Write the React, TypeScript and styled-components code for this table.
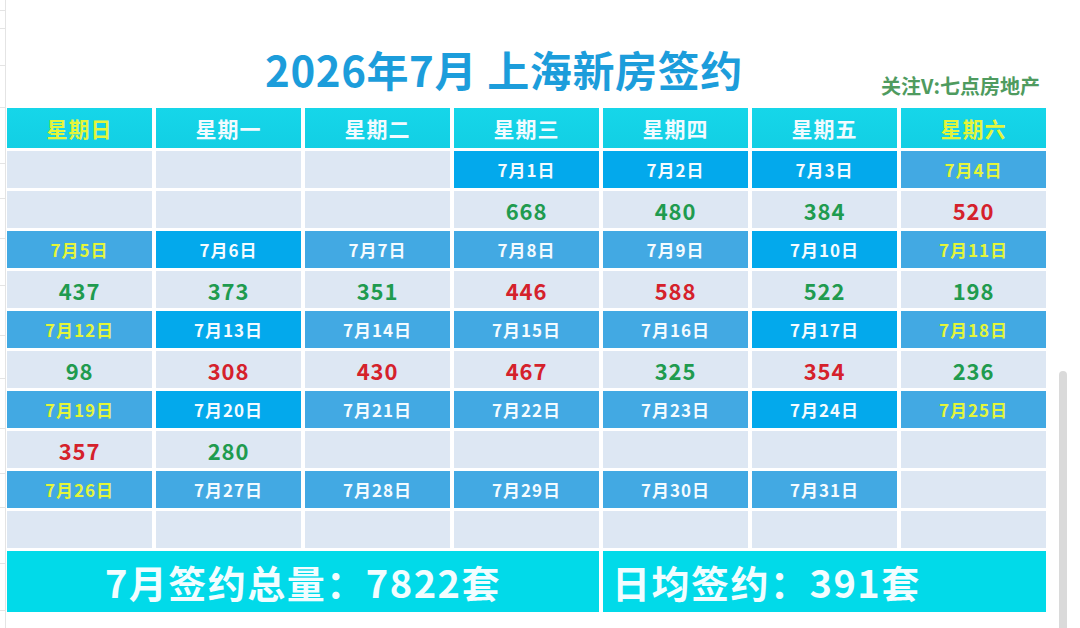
import * as React from "react";
import styled, { createGlobalStyle } from "styled-components";

const GlobalStyle = createGlobalStyle`
  html, body {
    margin: 0;
    padding: 0;
    background: #ffffff;
  }
  body {
    font-family: "Noto Sans CJK SC", "Noto Sans", sans-serif;
  }
`;

const Page = styled.div`
  position: relative;
  width: 1080px;
  height: 628px;
  overflow: hidden;
  display: flex;
  background: #fff;
`;

const Gutter = styled.div`
  position: relative;
  width: 5px;
  flex: none;
  border-right: 1px solid #e4e4e4;
`;

const Tick = styled.div<{ $top: number }>`
  position: absolute;
  left: 0;
  width: 5px;
  top: ${(p) => p.$top}px;
  border-top: 1px solid #e4e4e4;
`;

const Main = styled.div`
  flex: 1;
  padding-left: 1px;
  display: flex;
  flex-direction: column;
`;

const Heading = styled.div`
  height: 108px;
  width: 1039px;
  display: grid;
  grid-template-columns: 1fr auto;
  align-items: end;
`;

const Title = styled.h1`
  margin: 0 0 14px 258px;
  font-size: 42px;
  font-weight: 700;
  color: #1c9ddb;
  letter-spacing: 0.6px;
  line-height: 1.2;
  white-space: nowrap;
`;

const Follow = styled.div`
  margin: 0 6px 8px 0;
  font-size: 20px;
  font-weight: 700;
  color: #4f9b5f;
  white-space: nowrap;
`;

const Table = styled.div`
  display: grid;
  grid-template-columns: repeat(7, 145px);
  grid-template-rows: 40px repeat(10, 37px) 61px;
  column-gap: 4px;
  row-gap: 3px;
`;

const HeadCell = styled.div<{ $weekend?: boolean }>`
  display: flex;
  align-items: center;
  justify-content: center;
  background: linear-gradient(180deg, #16d6e9 0%, #12cfe4 100%);
  color: ${(p) => (p.$weekend ? "#e4f53a" : "#f2fbff")};
  font-size: 21px;
  font-weight: 700;
  letter-spacing: 1px;
`;

const DateCell = styled.div<{ $tone: "deep" | "soft" | "none"; $weekend?: boolean }>`
  display: flex;
  align-items: center;
  justify-content: center;
  background: ${(p) =>
    p.$tone === "deep" ? "#03a9ec" : p.$tone === "soft" ? "#42a9e3" : "#dde7f3"};
  color: ${(p) => (p.$weekend ? "#e4f53a" : "#f4fbff")};
  font-size: 17px;
  font-weight: 700;
  letter-spacing: 1px;
`;

const NumCell = styled.div<{ $up?: boolean }>`
  display: flex;
  align-items: center;
  justify-content: center;
  background: #dde7f3;
  color: ${(p) => (p.$up ? "#d5212b" : "#1f9b4f")};
  font-size: 22px;
  font-weight: 700;
  letter-spacing: 0.8px;
`;

const Summary = styled.div<{ $span: number; $center?: boolean }>`
  grid-column: span ${(p) => p.$span};
  display: flex;
  align-items: center;
  justify-content: ${(p) => (p.$center ? "center" : "flex-start")};
  padding-left: ${(p) => (p.$center ? "0" : "9px")};
  background: #01dae9;
  color: #f2fdff;
  font-size: 38px;
  font-weight: 700;
  letter-spacing: 1.5px;
  white-space: nowrap;
`;

const Scrollbar = styled.div`
  position: absolute;
  left: 1059px;
  top: 371px;
  width: 8px;
  bottom: 0;
  border-radius: 4px 4px 0 0;
  background: #dadada;
`;

type Day = { d?: number; tone: "deep" | "soft" | "none"; n?: number; up?: boolean };

const weekdays = ["星期日", "星期一", "星期二", "星期三", "星期四", "星期五", "星期六"];

const weeks: Day[][] = [
  [
    { tone: "none" },
    { tone: "none" },
    { tone: "none" },
    { d: 1, tone: "deep", n: 668 },
    { d: 2, tone: "deep", n: 480 },
    { d: 3, tone: "deep", n: 384 },
    { d: 4, tone: "soft", n: 520, up: true },
  ],
  [
    { d: 5, tone: "soft", n: 437 },
    { d: 6, tone: "deep", n: 373 },
    { d: 7, tone: "soft", n: 351 },
    { d: 8, tone: "soft", n: 446, up: true },
    { d: 9, tone: "soft", n: 588, up: true },
    { d: 10, tone: "deep", n: 522 },
    { d: 11, tone: "soft", n: 198 },
  ],
  [
    { d: 12, tone: "soft", n: 98 },
    { d: 13, tone: "deep", n: 308, up: true },
    { d: 14, tone: "soft", n: 430, up: true },
    { d: 15, tone: "soft", n: 467, up: true },
    { d: 16, tone: "soft", n: 325 },
    { d: 17, tone: "deep", n: 354, up: true },
    { d: 18, tone: "soft", n: 236 },
  ],
  [
    { d: 19, tone: "soft", n: 357, up: true },
    { d: 20, tone: "deep", n: 280 },
    { d: 21, tone: "soft" },
    { d: 22, tone: "soft" },
    { d: 23, tone: "soft" },
    { d: 24, tone: "deep" },
    { d: 25, tone: "soft" },
  ],
  [
    { d: 26, tone: "soft" },
    { d: 27, tone: "soft" },
    { d: 28, tone: "soft" },
    { d: 29, tone: "soft" },
    { d: 30, tone: "soft" },
    { d: 31, tone: "soft" },
    { tone: "none" },
  ],
];

const ticks = [10, 28, 65, 107, 163, 198, 238, 285, 335, 378, 428, 473, 507, 563, 610];

export default function App() {
  return (
    <>
      <GlobalStyle />
      <Page>
        <Gutter>
          {ticks.map((t) => (
            <Tick key={t} $top={t} />
          ))}
        </Gutter>
        <Main>
          <Heading>
            <Title>2026年7月 上海新房签约</Title>
            <Follow>关注V:七点房地产</Follow>
          </Heading>
          <Table>
            {weekdays.map((w, i) => (
              <HeadCell key={w} $weekend={i === 0 || i === 6}>
                {w}
              </HeadCell>
            ))}
            {weeks.map((week, wi) => (
              <React.Fragment key={wi}>
                {week.map((day, i) => (
                  <DateCell key={`d${i}`} $tone={day.tone} $weekend={i === 0 || i === 6}>
                    {day.d ? `7月${day.d}日` : ""}
                  </DateCell>
                ))}
                {week.map((day, i) => (
                  <NumCell key={`n${i}`} $up={day.up}>
                    {day.n ?? ""}
                  </NumCell>
                ))}
              </React.Fragment>
            ))}
            <Summary $span={4} $center>
              7月签约总量：7822套
            </Summary>
            <Summary $span={3}>日均签约：391套</Summary>
          </Table>
        </Main>
        <Scrollbar />
      </Page>
    </>
  );
}
